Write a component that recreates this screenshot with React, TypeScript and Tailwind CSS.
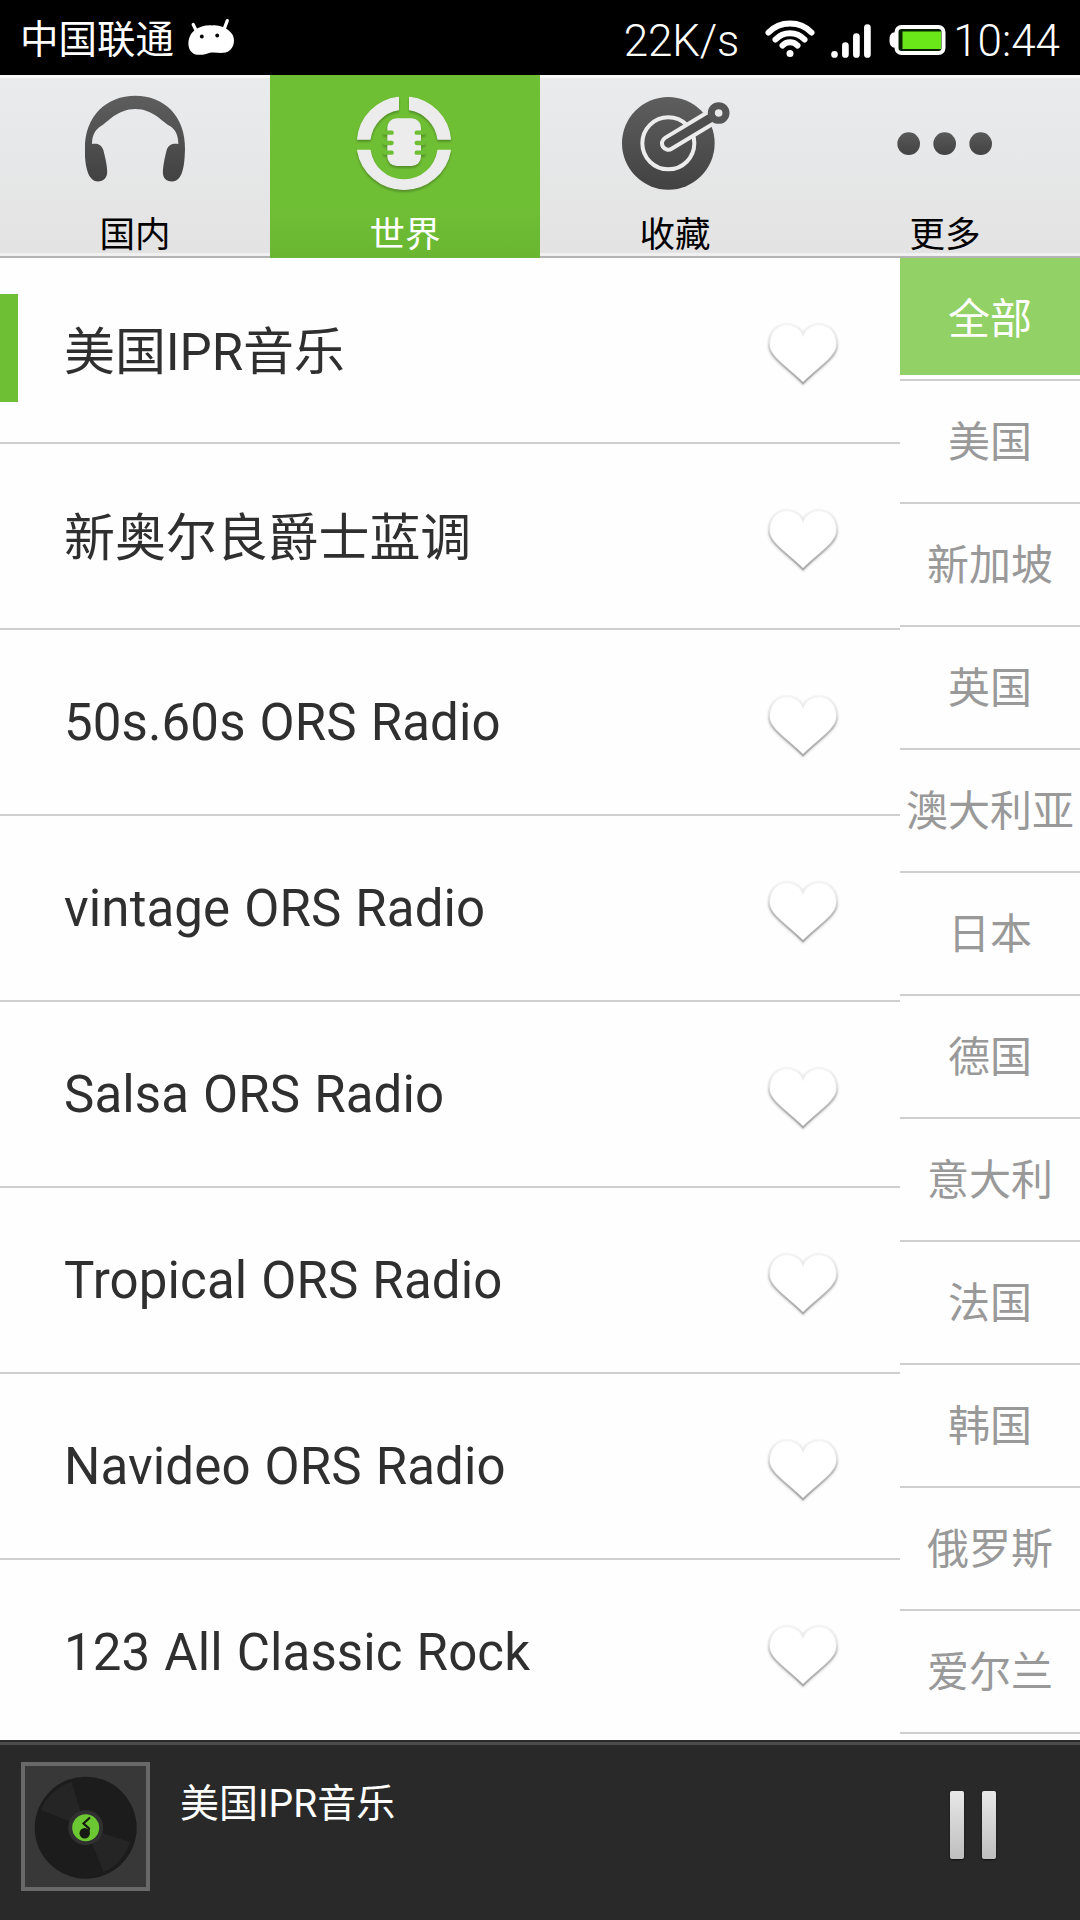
import React, { useState } from 'react';

const STATIONS = [
  '美国IPR音乐',
  '新奥尔良爵士蓝调',
  '50s.60s ORS Radio',
  'vintage ORS Radio',
  'Salsa ORS Radio',
  'Tropical ORS Radio',
  'Navideo ORS Radio',
  '123 All Classic Rock',
];

const REGIONS = ['全部', '美国', '新加坡', '英国', '澳大利亚', '日本', '德国', '意大利', '法国', '韩国', '俄罗斯', '爱尔兰'];

const HeadphonesIcon = () => (
  <svg viewBox="0 0 360 360" className="w-[120px] h-[120px]">
    <path
      fill="url(#darkFill)"
      d="M30 193C28 93 95 32 181 32C267 32 332 93 330 193L329 215C327 245 322 265 314 277C302 296 268 294 264 268C262 250 270 215 275 195C280 178 295 174 310 177C310 150 302 135 285 123C262 112 235 72 181 72C127 72 98 112 78 123C60 135 51 150 51 177C65 174 80 178 85 195C90 215 99 250 96 268C90 294 58 296 46 277C38 265 32 245 30 215Z"
    />
  </svg>
);

const MicIcon = () => (
  <svg viewBox="0 0 360 360" className="w-[120px] h-[120px] drop-shadow-[0_2px_1px_rgba(0,0,0,0.25)]">
    <g fill="#ececec" stroke="#ececec" strokeWidth="4" strokeLinejoin="round">
      <path d="M38 162A139 139 0 0 1 160 37V74A103 103 0 0 0 75 162Z" />
      <path d="M194 37A139 139 0 0 1 316 162H279A103 103 0 0 0 194 74Z" />
      <path d="M38 196H75A103 103 0 0 0 279 196H316A141 141 0 0 1 38 196Z" />
    </g>
    <rect x="127" y="100" width="101" height="143" rx="28" fill="#ececec" />
    <path d="M120 143H140M120 174H140M120 203H140M235 143H215M235 174H215M235 203H215" stroke="#6fbf35" strokeWidth="13" strokeLinecap="round" />
  </svg>
);

const TargetIcon = () => (
  <svg viewBox="0 0 360 360" className="w-[120px] h-[120px]">
    <clipPath id="disc"><circle cx="160" cy="175" r="141" /></clipPath>
    <circle cx="160" cy="175" r="139" fill="url(#darkFill)" />
    <circle cx="160" cy="175" r="78" fill="none" stroke="#ececec" strokeWidth="12" />
    <path d="M160 175L311 84" stroke="#ececec" strokeWidth="50" strokeLinecap="round" clipPath="url(#disc)" />
    <path d="M160 175L290 97" stroke="#4e4e4e" strokeWidth="26" strokeLinecap="round" />
    <circle cx="311" cy="84" r="22" fill="none" stroke="#555" strokeWidth="21" />
  </svg>
);

const MoreIcon = () => (
  <svg viewBox="0 0 360 360" className="w-[120px] h-[120px]">
    <g fill="url(#dotFill)">
      <circle cx="71" cy="176" r="34" />
      <circle cx="179" cy="176" r="34" />
      <circle cx="287" cy="176" r="34" />
    </g>
  </svg>
);

const TABS = [
  { name: '国内', Icon: HeadphonesIcon },
  { name: '世界', Icon: MicIcon },
  { name: '收藏', Icon: TargetIcon },
  { name: '更多', Icon: MoreIcon },
];

// Shared gradients for the tab icons and the heart outline
const Gradients = () => (
  <svg className="absolute w-0 h-0">
    <defs>
      <linearGradient id="darkFill" x1="0" y1="0" x2="0" y2="1">
        <stop offset="0" stopColor="#5e5e5e" />
        <stop offset="1" stopColor="#424242" />
      </linearGradient>
      <linearGradient id="dotFill" x1="0" y1="0" x2="0" y2="1">
        <stop offset="0" stopColor="#595959" />
        <stop offset="1" stopColor="#434343" />
      </linearGradient>
      <linearGradient id="heartLine" x1="0" y1="0" x2="0" y2="1">
        <stop offset="0" stopColor="#f4f4f4" />
        <stop offset="0.3" stopColor="#e4e4e4" />
        <stop offset="0.5" stopColor="#c0c0c0" />
        <stop offset="1" stopColor="#aaaaaa" />
      </linearGradient>
    </defs>
  </svg>
);

const StatusBar = () => (
  <div className="h-[75px] bg-black text-white flex items-center pl-5 pr-[20px]">
    <span className="text-[38.5px] leading-none pt-[5px]">中国联通</span>
    <svg viewBox="0 0 50 40" className="w-[48px] h-10 ml-[12px] mb-[3px]">
      <path d="M7.5 8L11 15M43 4L40 12" stroke="#fff" strokeWidth="3.4" strokeLinecap="round" />
      <path fill="#fff" d="M9 14C14 10 21 8.500 27 9C35 8 44 12 48 18C53 26 48 37 39 37.500C34 38 30 36.500 25 37.500C21 39 17 40 12 39.500C6 39 2.500 34 2.500 28C2.500 22 5 17 9 14Z" />
      <circle cx="16.500" cy="20.500" r="2" />
      <circle cx="32.500" cy="19.500" r="2" />
    </svg>
    <span className="ml-auto text-[44px] leading-none font-light pt-[6px] tracking-[-0.2px]">22K/s</span>
    <svg viewBox="0 0 52 40" className="w-[52px] h-10 ml-[25px]" fill="none" stroke="#fff" strokeWidth="6" strokeLinecap="round">
      <path d="M4.500 14.500C16 2.500 36 2.500 47.500 14.500M11.500 21.500C19.500 13 32.500 13 40.500 21.500M18.500 27.500C22.500 23 29.500 23 33.500 27.500" />
      <circle cx="26" cy="35.500" r="3.500" fill="#fff" stroke="none" />
    </svg>
    <svg viewBox="0 0 42 40" className="w-[42px] h-10 ml-[14px] mt-[2px]" stroke="#fff" strokeWidth="6.700" strokeLinecap="round">
      <path d="M4.500 35.400V35.500M15.400 26.500V35.500M26.400 17.500V35.500M37.400 8.500V35.500" />
    </svg>
    <svg viewBox="0 0 58 36" className="w-[58px] h-9 ml-[16px] mt-[5px]">
      <path d="M8 10.500H5C2 12 1.500 14.500 1.500 18S2 23.500 5 25.500H8Z" fill="#fff" />
      <rect x="8.500" y="5" width="47" height="26" rx="5" fill="#052200" stroke="#fff" strokeWidth="4" />
      <rect x="14.500" y="9.500" width="38.500" height="17.500" fill="#6ae718" />
    </svg>
    <span className="text-[44px] leading-none font-light pt-[6px] ml-[7px]">10:44</span>
  </div>
);

const HeartIcon = () => (
  <svg viewBox="0 0 240 240" className="w-20 h-20 mt-[7px] drop-shadow-[0_1px_1px_rgba(0,0,0,0.16)]">
    <path
      d="M120 61C105 18 18 15 18 93C18 130 70 158 120 208C170 158 222 130 222 93C222 15 135 18 120 61Z"
      fill="#fff"
      stroke="url(#heartLine)"
      strokeWidth="6"
    />
  </svg>
);

const RecordArt = () => (
  <svg viewBox="0 0 129 129" className="w-[129px] h-[129px]">
    <rect x="2" y="2" width="125" height="125" fill="#383838" stroke="#686868" strokeWidth="4" />
    <circle cx="64.700" cy="65.700" r="51" fill="#1c1c1c" />
    <path d="M64.700 65.700L20 48A48 48 0 0 1 50.500 20ZM64.700 65.700L109 80A48 48 0 0 1 82.500 110Z" fill="#252525" />
    <circle cx="64.700" cy="65.700" r="17.500" fill="#303030" />
    <circle cx="64.700" cy="65.700" r="13.500" fill="#6cc832" />
    <circle cx="63.700" cy="71.300" r="5.200" fill="#161a12" />
    <path d="M69 55.500L62.500 61.500L68 66.500L67 71" fill="none" stroke="#161a12" strokeWidth="2.200" />
  </svg>
);

const App: React.FC = () => {
  const [activeTab, setActiveTab] = useState('世界');
  const [region, setRegion] = useState('全部');
  const [playing, setPlaying] = useState(STATIONS[0]);

  return (
    <div className="w-[1080px] h-[1920px] overflow-hidden flex flex-col bg-[#fefefe] font-['Roboto','Noto_Sans_CJK_SC',sans-serif]">
      <Gradients />
      <StatusBar />

      <nav className="h-[183px] shrink-0 grid grid-cols-4">
        {TABS.map(({ name, Icon }) => (
          <button
            key={name}
            onClick={() => setActiveTab(name)}
            className={`flex flex-col items-center ${activeTab === name
              ? 'pt-[10px] text-white bg-linear-to-b from-[#6fbf35] from-70% to-[#6ab632]'
              : 'pt-[7px] text-black bg-linear-to-b from-[#eaebed] to-[#e3e3e3] border-t-3 border-[#f8f8f8] border-b-2 border-b-[#b4b4b4] shadow-[inset_0_-3px_0_#f0f0f0]'}`}
          >
            <Icon />
            <span className="text-[35.5px] leading-none mt-[13px]">{name}</span>
          </button>
        ))}
      </nav>

      <main className="h-[1482px] shrink-0 overflow-hidden flex">
        <ul className="w-[900px]">
          {STATIONS.map((station) => (
            <li
              key={station}
              onClick={() => setPlaying(station)}
              className="h-[186px] flex items-center border-b-2 border-[#cfcfcf] pr-[57px]"
            >
              <span className={`w-[18px] h-[108px] mb-[4px] ${playing === station ? 'bg-[#6fbf35]' : ''}`} />
              <span className={`ml-[46px] flex-1 text-[51px] text-[#2f2f2f] ${/[a-z]/.test(station) ? 'pt-[3px] tracking-[0.12px] [word-spacing:1.2px]' : 'pt-[7px] tracking-[-0.1px]'}`}>
                {station}
              </span>
              <HeartIcon />
            </li>
          ))}
        </ul>
        <ul className="w-[180px] text-[42px]">
          {REGIONS.map((r) => (
            <li key={r} onClick={() => setRegion(r)} className="h-[123px] border-b-2 border-[#cfcfcf]">
              <div className={`h-[117px] flex items-center justify-center whitespace-nowrap ${region === r ? 'bg-[#92d165] text-white pt-[6px]' : 'text-[#999] pt-[6px]'}`}>{r}</div>
            </li>
          ))}
        </ul>
      </main>

      <footer className="h-[180px] shrink-0 bg-[#292929] border-t-2 border-[#2b2b2b] shadow-[inset_0_3px_0_#4c4c4c] flex items-start pl-[21px] pr-[84px]">
        <div className="mt-[20px]"><RecordArt /></div>
        <span className="ml-[30px] mt-[43px] text-[39px] leading-none text-white flex-1">{playing}</span>
        <div className="mt-[49px] flex gap-[18px]">
          <span className="w-[14px] h-[68px] rounded-[2px] bg-linear-to-b from-[#e8e8e8] to-[#bebebe] shadow-[0_1px_2px_#111]" />
          <span className="w-[14px] h-[68px] rounded-[2px] bg-linear-to-b from-[#e8e8e8] to-[#bebebe] shadow-[0_1px_2px_#111]" />
        </div>
      </footer>
    </div>
  );
};

export default App;
